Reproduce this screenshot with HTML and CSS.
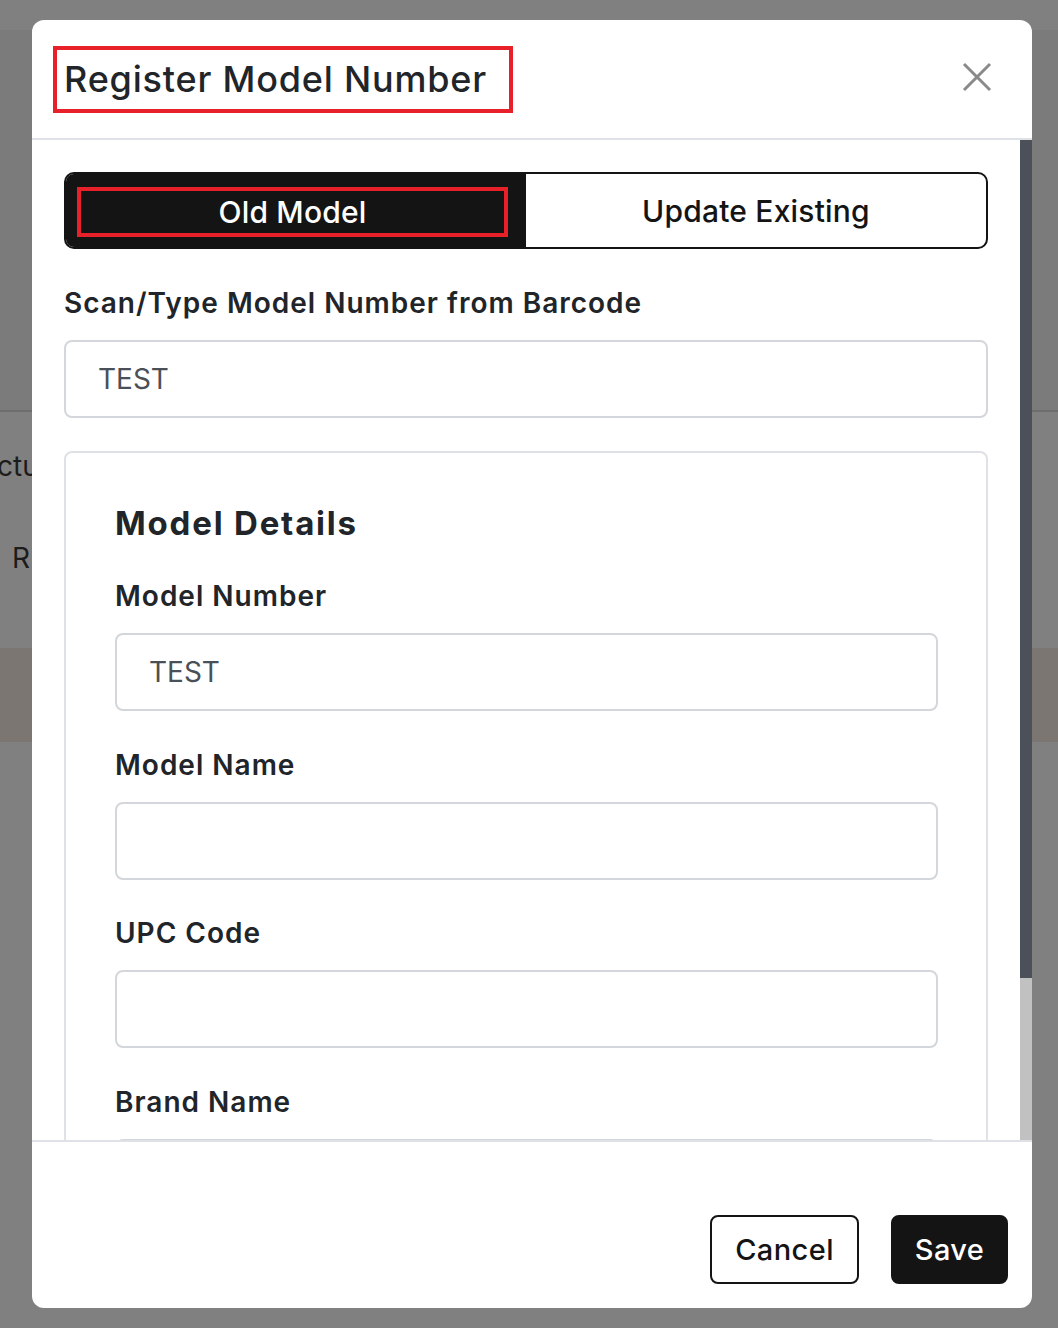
FILE: index.html
```html
<!DOCTYPE html>
<html lang="en">
<head>
<meta charset="utf-8">
<title>Register Model Number</title>
<link rel="stylesheet" href="styles.css">
</head>
<body>
<div class="page">
  <div class="page-top"></div>
  <div class="page-panel"></div>
  <div class="page-text page-text-1">ctures</div>
  <div class="page-text page-text-2">R</div>
  <div class="page-band"></div>
</div>

<div class="modal" role="dialog" aria-labelledby="modal-title">
  <header class="modal-header">
    <h1 class="modal-title" id="modal-title"><span class="title-box">Register Model Number</span></h1>
    <button class="close-btn" type="button" aria-label="Close">
      <svg width="30" height="30" viewBox="0 0 30 30" aria-hidden="true">
        <path d="M2 2 L28 28 M28 2 L2 28" stroke="#8a8a8a" stroke-width="3" stroke-linecap="butt" fill="none"/>
      </svg>
    </button>
  </header>

  <div class="modal-body">
    <div class="modal-scroll">
      <div class="toggle">
        <div class="seg seg-active"><span class="seg-box">Old Model</span></div>
        <div class="seg">Update Existing</div>
      </div>

      <label class="field-label field-label-top">Scan/Type Model Number from Barcode</label>
      <div class="input">TEST</div>

      <section class="card">
        <h2 class="card-title">Model Details</h2>
        <div class="field">
          <label class="field-label">Model Number</label>
          <div class="input">TEST</div>
        </div>
        <div class="field">
          <label class="field-label">Model Name</label>
          <div class="input"></div>
        </div>
        <div class="field">
          <label class="field-label">UPC Code</label>
          <div class="input"></div>
        </div>
        <div class="field">
          <label class="field-label">Brand Name</label>
          <div class="input"></div>
        </div>
      </section>
    </div>
    <div class="scrollbar">
      <div class="scrollbar-thumb"></div>
      <div class="scrollbar-track"></div>
    </div>
  </div>

  <footer class="modal-footer">
    <button class="btn btn-outline" type="button">Cancel</button>
    <button class="btn btn-dark" type="button">Save</button>
  </footer>
</div>
</body>
</html>
```

FILE: styles.css
```css
* {
  box-sizing: border-box;
}

html, body {
  margin: 0;
  padding: 0;
}

body {
  width: 1058px;
  height: 1328px;
  overflow: hidden;
  background: #808080;
  font-family: "Inter", "Liberation Sans", sans-serif;
  color: #212529;
  position: relative;
}

/* underlying page, dimmed by the backdrop */
.page {
  height: 1328px;
  overflow: hidden;
}

.page-top {
  height: 30px;
  background: #808080;
}

.page-panel {
  height: 382px;
  background: #7b7b7b;
  border-bottom: 2px solid #6d6d6d;
}

.page-text {
  font-size: 28px;
  line-height: 40px;
  color: #1c1c1c;
  white-space: nowrap;
}

.page-text-1 {
  margin-top: 34px;
  margin-left: -3px;
}

.page-text-2 {
  margin-top: 52px;
  padding-left: 12px;
}

.page-band {
  margin-top: 70px;
  height: 94px;
  background: #7c7673;
}

/* modal */
.modal {
  position: absolute;
  left: 32px;
  top: 20px;
  width: 1000px;
  height: 1288px;
  background: #ffffff;
  border-radius: 12px;
  overflow: hidden;
  display: flex;
  flex-direction: column;
}

.modal-header {
  height: 120px;
  flex: none;
  border-bottom: 2px solid #dee2e6;
  display: flex;
  align-items: center;
  justify-content: space-between;
  padding: 0 40px 0 21px;
}

.modal-title {
  margin: 0;
  font-size: 36px;
  font-weight: 500;
  letter-spacing: 0.8px;
}

.title-box {
  display: flex;
  align-items: center;
  width: 460px;
  height: 67px;
  padding-left: 7px;
  border: 4px solid #e8202a;
  color: #212529;
  white-space: nowrap;
}

.close-btn {
  width: 30px;
  height: 30px;
  padding: 0;
  margin-bottom: 4px;
  border: 0;
  background: transparent;
  display: flex;
}

.modal-body {
  height: 1000px;
  flex: none;
  display: flex;
}

.modal-scroll {
  flex: 1;
  overflow: hidden;
  padding: 32px 32px 0 32px;
}

.scrollbar {
  width: 12px;
  flex: none;
  display: flex;
  flex-direction: column;
}

.scrollbar-thumb {
  height: 838px;
  background: #4c5058;
}

.scrollbar-track {
  flex: 1;
  background: #c1c1c1;
}

/* toggle */
.toggle {
  height: 77px;
  border: 2px solid #141414;
  border-radius: 10px;
  overflow: hidden;
  display: grid;
  grid-template-columns: 1fr 1fr;
  font-size: 30px;
  font-weight: 500;
  letter-spacing: 0.2px;
}

.seg {
  display: flex;
  align-items: center;
  justify-content: center;
  color: #141414;
}

.seg-active {
  background: #141414;
  color: #ffffff;
  padding: 13px 18px 10px 11px;
  align-items: stretch;
}

.seg-box {
  flex: 1;
  display: flex;
  align-items: center;
  justify-content: center;
  border: 4px solid #e8202a;
}

/* fields */
.field-label {
  display: block;
  font-size: 28px;
  line-height: 32px;
  font-weight: 600;
  letter-spacing: 1px;
  color: #212529;
  margin-bottom: 21px;
  white-space: nowrap;
}

.field-label-top {
  margin-top: 38px;
}

.field + .field {
  margin-top: 37.5px;
}

.input {
  height: 78px;
  border: 2px solid #d3d7db;
  border-radius: 8px;
  padding: 0 32px;
  display: flex;
  align-items: center;
  font-size: 28px;
  font-weight: 400;
  color: #495057;
}

.card {
  margin-top: 33px;
  border: 2px solid #dee2e6;
  border-radius: 8px;
  padding: 52px 48px 48px 49px;
}

.card-title {
  margin: 0 0 39px 0;
  font-size: 33px;
  line-height: 36px;
  font-weight: 700;
  letter-spacing: 1.8px;
  color: #212529;
}

/* footer */
.modal-footer {
  flex: 1;
  border-top: 2px solid #dee2e6;
  display: flex;
  justify-content: flex-end;
  align-items: flex-end;
  gap: 32px;
  padding: 0 24px 24px 0;
}

.btn {
  height: 69px;
  padding: 0 25px;
  border-radius: 8px;
  font-family: "Inter", "Liberation Sans", sans-serif;
  font-size: 29px;
  font-weight: 500;
  letter-spacing: 0.4px;
  display: flex;
  align-items: center;
  justify-content: center;
}

.btn-outline {
  background: #ffffff;
  border: 2px solid #141414;
  color: #141414;
  width: 149px;
}

.btn-dark {
  background: #141414;
  border: 2px solid #141414;
  color: #ffffff;
  width: 117px;
}
```
